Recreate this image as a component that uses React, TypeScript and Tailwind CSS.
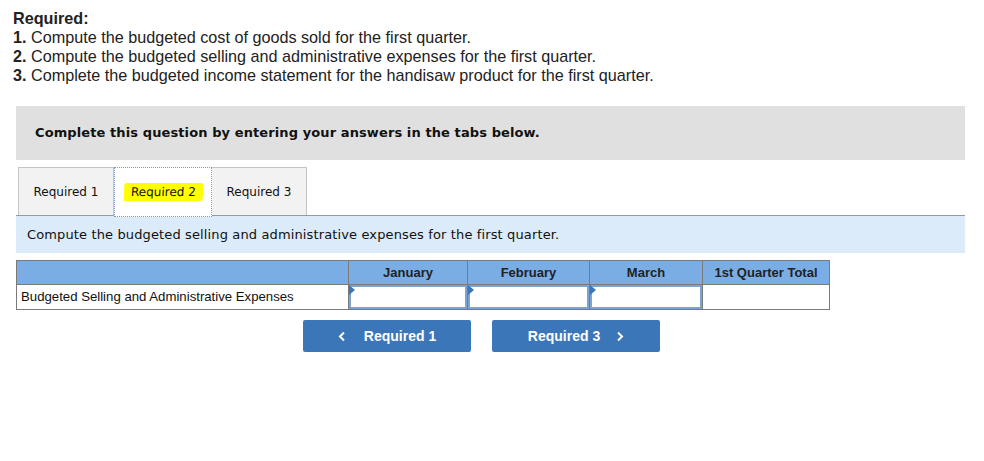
import React from 'react';

const months = ['January', 'February', 'March'];

function InputCell() {
  return (
    <td className="relative h-[25px] border border-[#7a7a7a] p-0">
      <div className="relative h-full w-full border-2 border-[#7ba4d4] bg-white">
        <span className="absolute left-[-2px] top-[-2px] h-0 w-0 border-b-[5px] border-l-[6px] border-t-[5px] border-b-transparent border-l-[#3b76b9] border-t-transparent" />
      </div>
    </td>
  );
}

export default function App() {
  return (
    <div className="min-h-[461px] w-[984px] bg-white">
      <div className="px-[13px] pt-[9px] font-['Liberation_Sans',Arial,sans-serif] text-[16.2px] leading-[19px] text-[#222]">
        <p className="font-bold">Required:</p>
        <p><b>1.</b> Compute the budgeted cost of goods sold for the first quarter.</p>
        <p><b>2.</b> Compute the budgeted selling and administrative expenses for the first quarter.</p>
        <p><b>3.</b> Complete the budgeted income statement for the handisaw product for the first quarter.</p>
      </div>

      <div className="ml-4 mt-[21px] w-[949px]">
        <div className="flex h-[54px] items-center bg-[#e0e0e0] pl-[19px] font-['DejaVu_Sans',Verdana,sans-serif] text-[13px] font-bold tracking-[0.1px] text-[#111]">
          Complete this question by entering your answers in the tabs below.
        </div>

        <div className="mt-2 flex h-[48px] items-end border-b border-[#9a9a9a] pl-[2px] font-['DejaVu_Sans',Verdana,sans-serif] text-[12px] text-[#111]">
          <div className="flex h-[48px] w-[96px] items-center justify-center border border-b-0 border-[#c4c4c4] bg-[#f2f2f2]">Required 1</div>
          <div className="relative z-10 mb-[-2px] flex h-[50px] w-[98px] items-center justify-center border border-dotted border-[#6f9bd0] bg-white">
            <span className="-skew-x-3 rounded-[2px] bg-[#ffff00] px-[7px] leading-[18px]">Required 2</span>
          </div>
          <div className="flex h-[48px] w-[95px] items-center justify-center border border-b-0 border-l-0 border-[#c4c4c4] bg-[#f2f2f2]">Required 3</div>
        </div>

        <div className="flex h-[37px] items-center bg-[#dbebf9] pl-[11px] font-['DejaVu_Sans',Verdana,sans-serif] text-[13px] tracking-[0.13px] text-[#111]">
          Compute the budgeted selling and administrative expenses for the first quarter.
        </div>

        <table className="mt-[7px] w-[814px] border-collapse font-['Liberation_Sans',Arial,sans-serif] text-[13px]">
          <thead>
            <tr className="h-[24px] bg-[#7aade4] text-[#222]">
              <th className="w-[332px] border border-[#7a7a7a]" />
              {months.map((m) => (
                <th key={m} className={`border border-[#7a7a7a] font-bold ${m === 'January' ? 'w-[119px]' : m === 'February' ? 'w-[122px]' : 'w-[113px]'}`}>
                  {m}
                </th>
              ))}
              <th className="border border-[#7a7a7a] font-bold">1st Quarter Total</th>
            </tr>
          </thead>
          <tbody>
            <tr className="h-[25px]">
              <td className="border border-[#7a7a7a] pl-[4px] text-left text-[13.2px] text-[#111]">Budgeted Selling and Administrative Expenses</td>
              <InputCell />
              <InputCell />
              <InputCell />
              <td className="border border-[#7a7a7a]" />
            </tr>
          </tbody>
        </table>

        <div className="mt-[10px] flex gap-[21px] pl-[287px] font-['Liberation_Sans',Arial,sans-serif] text-[14px] font-bold text-white">
          <button className="flex h-[32px] w-[168px] items-center justify-center gap-[18px] rounded-[2px] bg-[#3b76b9]">
            <svg width="8" height="11" viewBox="0 0 8 11"><path d="M6 1.5 2 5.5l4 4" fill="none" stroke="white" strokeWidth="2" /></svg>
            Required 1
          </button>
          <button className="flex h-[32px] w-[168px] items-center justify-center gap-[16px] rounded-[2px] bg-[#3b76b9]">
            Required 3
            <svg width="8" height="11" viewBox="0 0 8 11"><path d="M2 1.5l4 4-4 4" fill="none" stroke="white" strokeWidth="2" /></svg>
          </button>
        </div>
      </div>
    </div>
  );
}
